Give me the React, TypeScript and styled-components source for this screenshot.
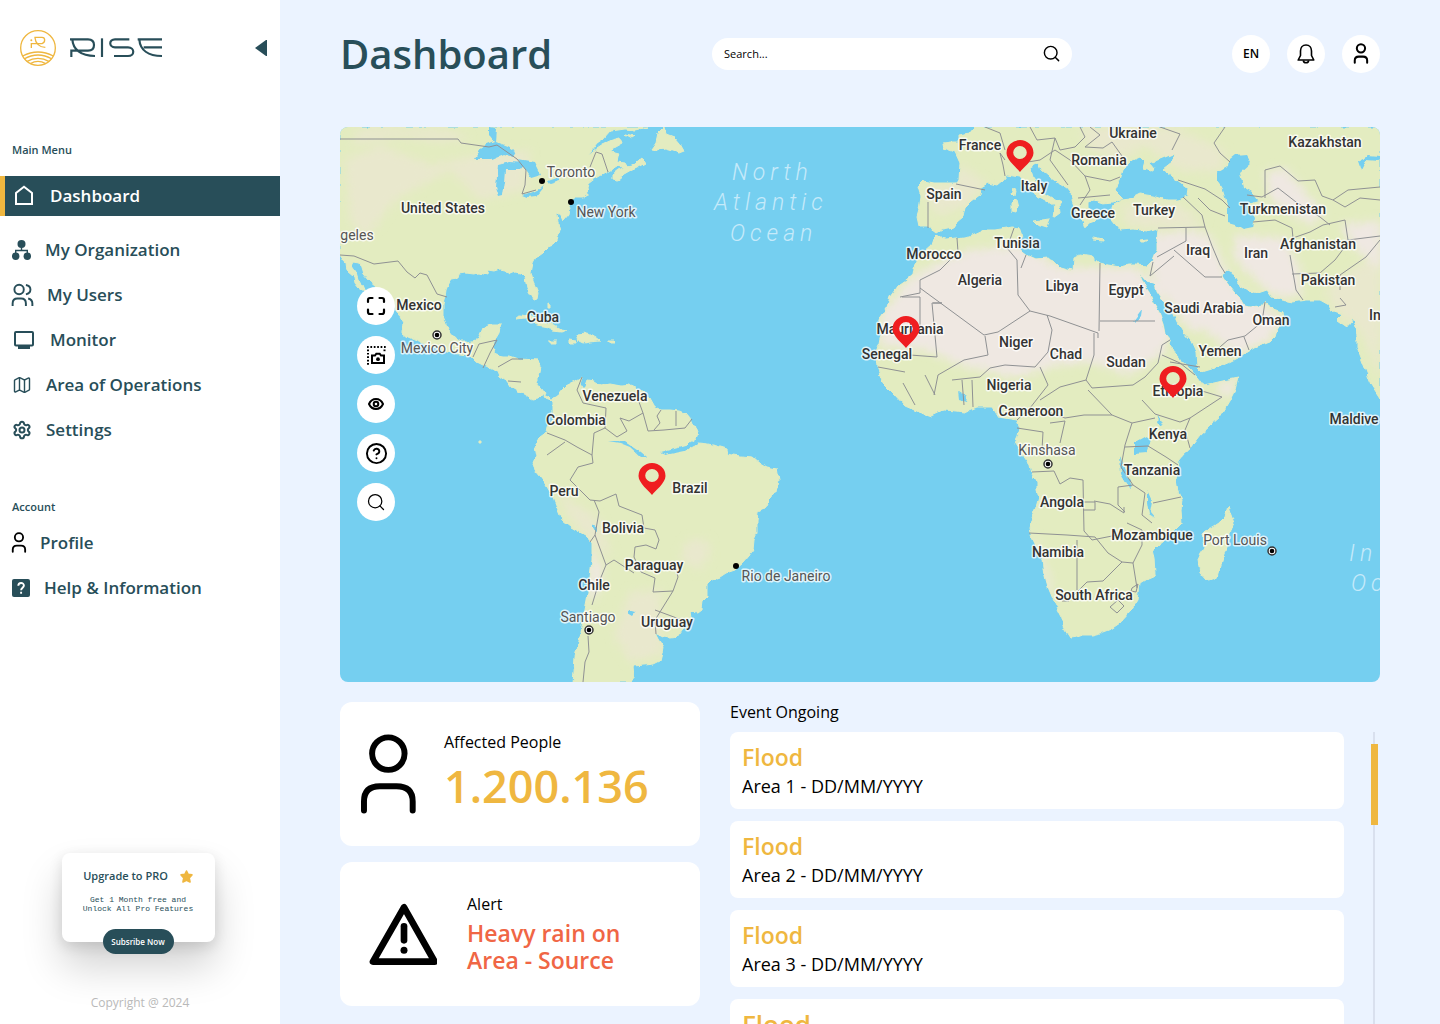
import React from "react";
import styled, { createGlobalStyle, css } from "styled-components";
import { CircleHelp, Map as MapIcon, Search, Settings } from "lucide-react";

const color = {
  teal: "#284e59",
  amber: "#efb740",
  coral: "#f06645",
  page: "#ebf3ff",
  water: "#75cff0",
  land: "#e3ecc0",
  sand: "#efe8e2",
  border: "#8f9193",
};

const GlobalStyle = createGlobalStyle`
  *, *::before, *::after { box-sizing: border-box; }
  body { margin: 0; background: ${color.page}; font-family: "Open Sans", "Noto Sans", sans-serif; color: #000; }
  button, input { font: inherit; color: inherit; }
  h1, h2, h3, p, ul { margin: 0; padding: 0; }
`;

const Shell = styled.div`
  display: grid;
  grid-template-columns: 280px minmax(0, 1fr);
  height: 100vh;
  overflow: hidden;
`;

const Sidebar = styled.aside`
  display: flex;
  flex-direction: column;
  background: #fff;
  color: ${color.teal};
  min-height: 0;
`;

const Brand = styled.div`
  display: flex;
  align-items: center;
  justify-content: space-between;
  height: 96px;
  padding: 0 12px 0 19px;
  margin-bottom: 44px;
`;

const CollapseButton = styled.button`
  display: flex;
  padding: 0;
  border: 0;
  background: none;
  cursor: pointer;
`;

const NavTitle = styled.h2`
  padding-left: 12px;
  font-size: 11px;
  line-height: 20px;
  font-weight: 600;
`;

const NavGroup = styled.ul<{ $top: number; $bottom: number }>`
  list-style: none;
  && { margin: ${(p) => p.$top}px 0 ${(p) => p.$bottom}px; }
`;

const NavLink = styled.a<{ $active?: boolean }>`
  display: flex;
  align-items: center;
  gap: 14px;
  height: 45px;
  padding-left: 12px;
  color: ${color.teal};
  font-size: 17px;
  line-height: 22px;
  font-weight: 600;
  text-decoration: none;
  svg { flex: none; }
  ${(p) =>
    p.$active &&
    css`
      height: 40px;
      margin-bottom: 11px;
      padding-left: 7px;
      border-left: 5px solid ${color.amber};
      background: ${color.teal};
      color: #fff;
    `}
`;

const SidebarFooter = styled.footer`
  display: flex;
  flex-direction: column;
  align-items: center;
  margin-top: auto;
  padding-bottom: 11px;
`;

const UpgradeCard = styled.section`
  display: flex;
  flex-direction: column;
  align-items: center;
  width: 153px;
  height: 89px;
  margin: 0 4px 51px 0;
  padding-top: 13px;
  border-radius: 8px;
  background: #fff;
  box-shadow: 0 24px 40px rgba(0, 0, 0, 0.18), 0 4px 14px rgba(0, 0, 0, 0.12);
`;

const UpgradeTitle = styled.h3`
  display: flex;
  align-items: center;
  gap: 12px;
  font-size: 11px;
  line-height: 20px;
  font-weight: 600;
`;

const UpgradeText = styled.p`
  && { margin: 9px 0 16px; }
  font-family: "Liberation Mono", monospace;
  font-size: 8px;
  line-height: 9px;
  text-align: center;
`;

const SubscribeButton = styled.button`
  flex: none;
  width: 71px;
  height: 25px;
  padding: 0;
  border: 0;
  border-radius: 13px;
  background: ${color.teal};
  color: #fff;
  font-size: 8px;
  font-weight: 600;
  cursor: pointer;
`;

const Copyright = styled.p`
  font-size: 12px;
  line-height: 20px;
  color: #b9b9b9;
`;

const Main = styled.main`
  display: flex;
  flex-direction: column;
  min-width: 0;
  min-height: 0;
  padding: 0 60px;
`;

const Header = styled.header`
  display: flex;
  flex: none;
  align-items: center;
  justify-content: space-between;
  height: 107px;
  margin-bottom: 20px;
`;

const PageTitle = styled.h1`
  color: ${color.teal};
  font-size: 40px;
  line-height: 48px;
  font-weight: 600;
`;

const SearchBox = styled.label`
  display: flex;
  align-items: center;
  width: 360px;
  height: 32px;
  padding: 0 11px 0 12px;
  border-radius: 16px;
  background: #fff;
`;

const SearchInput = styled.input`
  flex: 1;
  min-width: 0;
  padding: 0;
  border: 0;
  outline: 0;
  background: none;
  font-size: 11px;
  &::placeholder { color: #000; opacity: 1; }
`;

const HeaderActions = styled.div`
  display: flex;
  gap: 17px;
`;

const RoundButton = styled.button`
  display: flex;
  align-items: center;
  justify-content: center;
  width: 38px;
  height: 38px;
  padding: 0;
  border: 0;
  border-radius: 50%;
  background: #fff;
  color: #000;
  font-size: 12px;
  font-weight: 600;
  cursor: pointer;
`;

const MapPanel = styled.section`
  position: relative;
  flex: none;
  overflow: hidden;
  border-radius: 8px;
  background: ${color.water};
`;

const MapDrawing = styled.svg`
  display: block;
  width: 100%;
  height: auto;
`;

const MapTools = styled.div`
  position: absolute;
  left: 17px;
  top: 160px;
  display: flex;
  flex-direction: column;
  gap: 11px;
`;

const Country = styled.text<{ $city?: boolean }>`
  font-family: Roboto, sans-serif;
  font-size: 14px;
  font-weight: ${(p) => (p.$city ? 400 : 500)};
  fill: ${(p) => (p.$city ? "#555" : "#333")};
  stroke: rgba(255, 255, 255, 0.75);
  stroke-width: 3px;
  stroke-linejoin: round;
  paint-order: stroke;
  text-anchor: middle;
`;

const Ocean = styled.text`
  font-family: Roboto, sans-serif;
  font-size: 23px;
  font-style: italic;
  font-weight: 300;
  letter-spacing: 5px;
  fill: #c5eafa;
`;

const Lower = styled.div`
  display: grid;
  grid-template-columns: 360px minmax(0, 1fr);
  flex: 1;
  gap: 30px;
  min-height: 0;
  padding-top: 20px;
`;

const Stats = styled.div`
  display: flex;
  flex-direction: column;
  gap: 16px;
`;

const StatCard = styled.section<{ $inset: number; $gap: number }>`
  display: flex;
  flex: none;
  align-items: center;
  gap: ${(p) => p.$gap}px;
  height: 144px;
  padding-left: ${(p) => p.$inset}px;
  border-radius: 12px;
  background: #fff;
`;

const StatLabel = styled.h2`
  font-size: 16px;
  line-height: 24px;
  font-weight: 400;
`;

const StatNumber = styled.p`
  color: ${color.amber};
  font-size: 45px;
  line-height: 64px;
  font-weight: 600;
`;

const AlertText = styled.p`
  && { margin: 4px 0 3px; }
  color: ${color.coral};
  font-size: 23px;
  line-height: 27px;
  font-weight: 600;
`;

const Events = styled.section`
  display: flex;
  flex-direction: column;
  min-height: 0;
`;

const EventsTitle = styled.h2`
  flex: none;
  font-size: 16px;
  line-height: 20px;
  font-weight: 400;
  padding-bottom: 10px;
`;

const EventsBody = styled.div`
  display: flex;
  flex: 1;
  gap: 27px;
  min-height: 0;
  overflow: hidden;
`;

const EventList = styled.ul`
  display: flex;
  flex: 1;
  flex-direction: column;
  gap: 12px;
  list-style: none;
`;

const EventCard = styled.li`
  flex: none;
  height: 77px;
  padding: 11px 12px;
  border-radius: 8px;
  background: #fff;
`;

const EventName = styled.h3<{ $large?: boolean }>`
  color: ${color.amber};
  font-size: ${(p) => (p.$large ? 26 : 23)}px;
  line-height: 28px;
  font-weight: 600;
`;

const EventMeta = styled.p`
  padding-top: 1px;
  font-size: 18px;
  line-height: 28px;
`;

const ScrollTrack = styled.div`
  width: 7px;
  margin-right: 2px;
  padding-top: 12px;
  background: linear-gradient(#d9e0ee, #d9e0ee) 2px 0 / 2px 100% no-repeat;
`;

const ScrollThumb = styled.div`
  width: 7px;
  height: 81px;
  background: ${color.amber};
`;

function Logo() {
  return (
    <svg width="146" height="38" viewBox="57 87 438 114" fill="none" role="img" aria-label="RISE">
      <g stroke={color.amber} strokeWidth="4">
        <circle cx="114" cy="144" r="52" />
        <path d="M103 112H126Q134 112 134 120T126 131H94V144M105 113C106 130 118 142 136 142" />
        <path d="M68 168Q114 144 160 168M72 177Q114 153 156 177M80 185Q114 165 148 185M91 191Q114 177 137 191" />
      </g>
      <circle cx="94" cy="121" r="3" fill={color.amber} />
      <g stroke={color.teal} strokeWidth="6.5">
        <path d="M210 118H264Q282 118 282 135T264 152H214V171M217 118C219 148 242 168 285 168" />
        <path d="M306 115V171" />
        <path d="M388 118H345C326 118 326 142 345 142H384C405 142 405 168 384 168H342" />
        <path d="M413 118H486M418 118C420 150 445 168 486 168M431 142H486" />
      </g>
    </svg>
  );
}

const HomeIcon = () => (
  <svg width="24" height="24" viewBox="0 0 24 24" fill="none" stroke="currentColor" strokeWidth="2">
    <path d="M4 20V9L12 2.700L20 9V20Z" />
  </svg>
);

const OrgIcon = () => (
  <svg width="19" height="20" viewBox="0 0 19 20" fill="currentColor">
    <circle cx="9.500" cy="4" r="4" />
    <circle cx="3.700" cy="16.300" r="3.700" />
    <circle cx="15.300" cy="16.300" r="3.700" />
    <path d="M9.500 6V10.500M3.700 14V10.500H15.300V14" fill="none" stroke="currentColor" strokeWidth="1.400" />
  </svg>
);

const UsersIcon = () => (
  <svg width="21" height="22" viewBox="35 158 63 68" fill="none" stroke="currentColor" strokeWidth="6" overflow="visible">
    <circle cx="56" cy="175" r="14.500" />
    <path d="M36 226V218Q36 203 51 203H62Q77 203 77 218V226M77 161Q91 163 91 175T77 190M84 203Q97 206 97 218V226" />
  </svg>
);

const MonitorIcon = () => (
  <svg width="24" height="20" viewBox="0 0 24 20" fill="none" stroke="currentColor" strokeWidth="2">
    <rect x="3" y="2" width="18" height="13.500" rx="1" />
    <path d="M6 17.500H18" strokeWidth="3" />
  </svg>
);

function PersonIcon({ width, height, stroke = 18 }: { width: number; height: number; stroke?: number }) {
  return (
    <svg width={width} height={height} viewBox="63 132 166 240" fill="none" stroke="#000" strokeWidth={stroke} strokeLinecap="round" overflow="visible">
      <circle cx="145.500" cy="190.500" r="49" />
      <path d="M72 362V335Q72 289 120 289H170Q219 289 219 335V362" />
    </svg>
  );
}

const HelpSquareIcon = () => (
  <svg width="18" height="18" viewBox="0 0 18 18" fill="none">
    <rect width="18" height="18" rx="2" fill="currentColor" />
    <path d="M6.300 6.800C6.300 3 11.900 3.100 11.900 6.600C11.900 8.600 9.100 8.800 9.100 11.200M9.100 12.800V14.800" stroke="#fff" strokeWidth="1.900" />
  </svg>
);

const BellIcon = () => (
  <svg width="20" height="22" viewBox="0 0 20 22" fill="none" stroke="#000" strokeWidth="1.600" strokeLinejoin="round">
    <path d="M10 2C6.500 2 4.500 4.700 4.500 8V12.500L2.200 17H17.800L15.500 12.500V8C15.500 4.700 13.500 2 10 2Z" />
    <path d="M7.300 17.500C7.800 20.500 12.200 20.500 12.700 17.500" />
  </svg>
);

const ExpandIcon = () => (
  <svg width="20" height="20" viewBox="0 0 20 20" fill="none" stroke="#000" strokeWidth="2.200" strokeLinecap="round">
    <path d="M2 6V4Q2 2 4 2H6.500M13.500 2H16Q18 2 18 4V6M18 13.500V16Q18 18 16 18H13.500M6.500 18H4Q2 18 2 16V13.500" />
  </svg>
);

const SnapshotIcon = () => (
  <svg width="20" height="20" viewBox="0 0 20 20" fill="none" stroke="#000" strokeWidth="2">
    <path d="M1 2H20" strokeDasharray="1.700 1.700" />
    <path d="M2 4.500V20" strokeDasharray="1.700 1.700" />
    <path d="M18.500 4.500V7" strokeDasharray="1.700 1.700" />
    <path d="M6 10.500H9L10.300 8.700H13.700L15 10.500H18V18H6Z" />
    <circle cx="12" cy="14.200" r="1.900" fill="#000" stroke="none" />
  </svg>
);

const EyeIcon = () => (
  <svg width="16" height="12" viewBox="0 0 16 12" fill="none" stroke="#000" strokeWidth="2">
    <path d="M1 6C4 -.6 12 -.6 15 6C12 12.600 4 12.600 1 6Z" />
    <circle cx="8" cy="6" r="2.300" />
  </svg>
);

const AlertIcon = () => (
  <svg width="68" height="63" viewBox="88 642 204 187" fill="none" stroke="#000" strokeWidth="20" strokeLinecap="round" strokeLinejoin="round">
    <path d="M193 654L100 817H285Z" />
    <path d="M193 711V753" />
    <circle cx="193" cy="783" r="10.500" fill="#000" stroke="none" />
  </svg>
);

const americas = [
  "M340 127H648L636 130L624 129L610 131L603 139L597 143L588 155L597 148L603 144L612 140L620 138L622 143L613 148L612 151L620 153L618 162L625 163L628 168L617 166L607 172L600 176L593 180L588 184L587 188L588 195L583 198L573 198L567 203L570 208L569 214L563 221L560 214L557 213L558 223L560 230L558 237L557 241L553 245L548 247L543 252L536 257L533 263L531 273L533 281L536 288L538 293L537 299L534 300L530 293L527 288L525 278L520 273L515 272L510 274L505 270L500 269L494 271L488 270L487 275L480 273L473 274L465 273L459 274L458 278L452 279L448 285L446 290L445 297L443 304L443 317L448 330L455 338L461 342L467 342L477 340L480 335L483 328L487 326L492 324L501 324L499 333L496 338L495 343L493 353L498 355L503 356L510 356L519 359L538 360L540 366L538 377L536 382L541 388L545 393L543 397L551 400L560 393L566 386L574 382L575 386L565 395L558 402L552 402L547 397L542 395L538 399L533 400L526 396L520 392L510 386L507 381L500 376L498 371L487 367L475 361L467 355L460 354L450 353L436 348L420 342L408 337L403 333L404 323L400 316L392 305L386 296L377 287L370 281L363 273L360 263L354 262L352 266L356 272L358 279L363 285L366 292L359 288L355 283L354 277L347 271L346 264L340 255Z",
  "M613 174L618 170L623 168L631 166L637 162L642 158L645 163L638 167L631 170L624 174L617 180L613 179Z",
  "M651 149L656 142L658 133L664 127L666 134L674 137L680 144L684 151L679 153L673 151L666 149L656 150Z",
  "M625 134L635 136L632 138Z",
  "M553 403L560 393L566 386L574 382L582 377L580 383L584 389L587 381L594 382L600 386L610 384L621 386L630 385L636 390L643 391L650 398L655 407L661 410L670 410L679 411L686 413L691 419L693 424L698 432L696 438L690 442L685 447L679 450L687 449L695 445L698 443L708 444L717 446L727 449L728 454L740 456L753 457L760 463L767 467L777 469L779 480L777 491L771 499L767 503L764 509L758 512L757 522L757 533L754 540L753 550L749 556L743 563L735 570L726 573L720 577L712 580L707 585L707 597L702 602L701 609L697 612L690 611L691 618L685 622L682 630L677 637L670 638L663 637L655 633L658 639L663 647L662 653L660 661L654 664L645 665L633 666L634 677L631 682H573L574 672L575 657L580 637L584 615L587 600L590 577L592 560L592 543L585 535L571 527L562 520L558 510L553 497L546 485L540 477L535 471L533 463L537 458L535 448L537 441L540 437L547 432L548 427L553 417Z",
  "M515 319L520 315L532 316L542 322L555 325L561 329L568 330L561 332L552 331L549 327L538 325L525 318Z",
  "M577 334L587 333L596 338L600 341L589 342L583 343L579 341Z",
  "M549 341H556V343H549ZM608 341H614V343H608ZM569 340L576 341V343H569ZM548 304L550 305V308H548ZM478 441H480V443H478Z",
];

const afroEurasia = [
  "M975 127L970 133L958 135L958 142L951 142L943 143L944 148L955 152L960 163L959 180L957 183L946 183L934 183L924 181L918 187L921 197L919 210L917 217L919 226L928 226L937 233L942 230L953 228L957 222L963 217L965 208L972 201L980 195L981 187L988 183L997 185L1003 180L1007 175L1020 177L1024 183L1027 187L1036 195L1045 200L1053 205L1054 211L1053 218L1060 213L1059 205L1063 203L1052 198L1045 194L1041 188L1033 177L1030 167L1038 163L1041 170L1048 176L1057 182L1067 188L1071 193L1072 200L1076 212L1082 219L1085 228L1089 223L1095 221L1100 217L1094 212L1087 208L1087 202L1094 200L1103 203L1112 202L1120 200L1123 198L1115 190L1120 180L1123 170L1133 160L1140 157L1145 162L1143 169L1150 171L1154 168L1150 163L1175 153L1172 162L1163 169L1177 180L1188 188L1187 197L1178 200L1167 200L1153 196L1140 194L1130 199L1122 200L1113 205L1110 213L1112 220L1120 230L1133 229L1147 231L1158 228L1157 240L1157 250L1153 260L1147 266L1137 265L1128 265L1120 267L1108 265L1100 263L1093 257L1080 255L1074 258L1073 270L1067 269L1060 267L1054 261L1047 258L1036 259L1027 255L1018 248L1020 241L1023 237L1020 228L1012 227L1007 228L995 230L983 230L970 236L957 238L945 239L938 235L934 239L932 245L923 253L915 263L913 275L906 281L897 287L890 297L887 307L880 317L878 323L882 333L880 343L876 351L877 367L883 383L893 393L905 406L919 412L931 416L944 410L957 411L965 412L977 407L992 407L998 417L1017 420L1020 428L1018 437L1015 443L1022 454L1030 465L1032 474L1037 483L1037 490L1039 497L1036 507L1032 517L1029 528L1030 533L1036 546L1043 560L1045 576L1048 587L1053 599L1057 607L1063 619L1063 627L1070 638L1077 637L1083 635L1092 635L1100 633L1111 629L1120 623L1131 611L1138 600L1140 583L1148 578L1155 575L1154 558L1152 550L1158 544L1167 537L1176 529L1182 523L1181 510L1182 500L1178 491L1176 480L1178 460L1183 454L1190 448L1200 435L1211 425L1220 417L1229 402L1235 390L1238 378L1227 380L1214 383L1203 385L1197 377L1189 368L1177 357L1173 349L1170 340L1165 334L1163 323L1159 312L1153 302L1149 292L1144 285L1139 273L1146 281L1155 283L1157 292L1164 302L1173 312L1178 323L1184 333L1191 341L1196 352L1197 367L1202 372L1215 368L1229 362L1243 355L1254 348L1270 342L1275 337L1277 330L1283 320L1282 312L1273 309L1267 305L1265 300L1260 306L1250 307L1243 305L1239 297L1234 292L1227 283L1222 275L1227 271L1235 275L1238 284L1248 291L1258 293L1267 290L1272 297L1282 300L1293 302L1306 300L1320 300L1329 305L1333 312L1342 315L1337 320L1347 327L1353 319L1357 335L1357 347L1362 360L1367 373L1371 384L1380 398V127Z",
  "M1228 506L1231 515L1234 523L1231 529L1227 547L1222 562L1218 577L1213 580L1207 581L1200 573L1198 560L1201 553L1205 547L1202 533L1205 530L1213 527L1219 523L1225 517Z",
  "M1014 188L1016 191L1015 196L1012 193ZM1012 203L1016 199L1018 207L1016 213L1012 212ZM1034 221L1050 219L1047 227L1037 224ZM1093 238L1103 240V241L1093 240ZM1140 240L1147 239L1145 242L1141 242Z",
];

const sands = [
  "M938 262L970 250L1020 245L1060 267H1137L1160 290L1172 330L1164 352L1130 375L1090 362L1055 366L1015 378L960 365L925 350L880 346L882 312L912 277Z",
  "M1150 235L1190 230L1210 235L1233 285L1262 304L1283 318L1268 342L1235 355L1205 330L1190 330L1155 284L1149 262Z",
  "M1235 235L1285 238L1300 270L1300 298L1272 295L1235 260Z",
  "M1265 172L1285 168L1325 215L1310 225L1270 200Z",
  "M1340 225L1380 220V270L1352 245Z",
  "M592 540L597 558L603 570L597 595L587 600L590 570Z",
  "M1030 530L1043 555L1052 595L1045 590L1040 560Z",
  "M1222 382L1238 378L1230 396L1217 393Z",
];

const lightSands = [
  "M345 160L380 145L430 165L480 155L530 150L525 190L480 200L450 170L395 200L365 240L350 220Z",
  "M360 128L450 130L470 140L440 142L400 137L350 145Z",
  "M630 592L660 590L662 655L630 662L614 635Z",
  "M688 540L708 540L710 557L697 570L680 558Z",
  "M555 490L600 520L612 560L600 550L575 525Z",
  "M960 165L985 182L970 205L935 215L925 190L955 183Z",
  "M1080 127H1170L1225 150L1220 172L1180 170L1145 145L1120 158L1090 150Z",
  "M1120 205L1180 205L1205 225L1170 228L1130 227Z",
  "M1325 290L1380 250V380L1360 330L1335 310Z",
];

const lakes = [
  "M474 159L484 145L494 141L490 136L490 127L496 128L495 142L508 147L516 152L513 157L503 154L491 159Z",
  "M498 165L510 162L525 163L520 169L506 169L505 182L503 195L499 196L496 187Z",
  "M518 160L535 163L541 175L531 178L525 169Z",
  "M522 196L533 192L545 186L536 197L527 198Z",
  "M548 181L560 177V181L550 184Z",
  "M1235 155L1246 154L1251 163L1240 173L1243 187L1252 192L1258 200L1247 203L1255 217L1253 228L1243 230L1235 225L1228 223L1228 207L1222 187L1217 180L1217 173L1229 166L1230 159Z",
  "M1358 161L1368 156L1380 157V161L1366 160L1361 170Z",
  "M1134 443L1145 437L1151 440L1146 453L1134 454Z",
  "M1120 455L1124 468L1132 485L1129 488L1121 474ZM1147 490L1152 501L1150 512L1155 518L1149 514L1147 502Z",
  "M1133 321L1142 309L1141 316L1135 323ZM1158 415L1163 426L1157 423Z",
  "M608 441L625 441L640 451L647 457L641 457L630 447L620 443ZM660 453L685 446L695 443L685 451L665 455Z",
  "M592 524L598 527L597 531L592 528ZM628 610L635 612L632 616L627 613Z",
  "M958 391L967 397L966 402L959 400Z",
];

const borders =
  "M340 139H458L461 143L489 147L497 145L517 159L526 170L525 185L522 194L536 190M590 167L596 152L602 154L608 172" +
  "M340 255L354 256L374 264L398 261L407 272L415 278L420 273L427 275L437 294L447 297" +
  "M473 357L479 344L497 340L490 353L483 368M498 367L512 359L523 359M508 381L521 382" +
  "M582 377L577 390L583 403L606 408L605 428L617 437L627 431L620 418L629 421L643 413L648 431L664 430L685 428L692 419M654 430L660 423L657 416L661 410M676 411V426M643 413L639 402" +
  "M547 433L565 440L577 447L592 455L593 463L578 467L570 480L583 493L590 500L600 501L616 494L619 506L642 515L644 528L655 530L659 540L656 549L646 545L635 547L634 557L641 572L655 578L653 592L673 591L678 577L675 565M605 428L594 433L592 455M547 455L565 442M594 500L599 512L595 535L606 565L599 582L592 605M595 535L590 542M606 565L614 560L634 573M673 591L655 620L656 634M655 610L682 620M588 636L589 652L585 662L583 682" +
  "M956 184L985 190M928 228V202M1005 160L1000 153L1003 165L1005 176M985 127L1000 133L1005 150M1030 127L1037 140L1055 138L1060 150L1075 147L1085 137L1080 127M1022 163L1040 160L1055 150L1070 160L1085 176L1090 190L1080 205M1055 138L1050 160L1068 185M1085 176L1110 181L1120 177M1078 198L1110 195M1090 127L1100 135L1085 147L1103 148L1112 142L1122 156M1160 127L1180 134L1172 150M1225 127L1214 143L1220 153L1230 162" +
  "M957 238L958 252L940 270L920 280L920 293L900 297M920 288L984 335L998 332L1030 311L1050 316L1098 333V338M1014 228L1007 248L1017 260L1018 295L1030 311M1026 255L1021 268M1100 263L1099 331M1100 321H1155M902 297H920V327H897M933 303H942L932 303L937 357L910 355M985 336L988 355L964 360L938 375L934 395M1047 315L1052 330L1048 352L1035 367L1005 365L990 368L980 377L952 380M1094 333V355L1086 380L1060 387L1040 400M1040 367L1048 385L1030 408L1017 420M1086 380L1092 388L1133 385L1145 377L1158 363L1162 345L1170 340M1142 400L1155 414L1180 422L1190 418L1222 397L1192 388M1162 355L1180 363L1195 375M1088 390L1112 415L1084 415L1065 418L1046 411M1112 415L1132 423L1155 418M1132 423L1125 445L1121 467L1133 485L1118 487V505L1125 512M1050 423L1065 421L1060 443M1017 428L1043 432L1042 450M1032 472L1054 471L1060 484L1070 478L1083 480L1084 531L1092 540L1117 535M1029 533L1067 535L1095 537M1077 540V590M1095 537L1108 553L1122 562L1133 563L1142 545V530L1127 523M1122 562L1103 581L1087 582L1072 597M1133 563L1137 588M1083 502H1095V510H1083M1094 501L1110 504L1124 513V507M1133 485L1145 493L1142 515L1152 523M1153 503L1181 497M1125 447L1148 446L1166 457L1178 465M1190 448L1185 430L1190 418M1110 607L1118 600L1124 606L1117 613ZM1062 601H1069M962 380L964 405M972 380L973 407M925 375L935 395M878 367L905 372M903 383L915 405M1132 588L1138 584L1136 592L1131 591Z" +
  "M1158 228L1205 227L1212 246L1220 265L1225 273M1186 228V241L1157 257M1174 250L1205 277L1222 277M1174 256L1150 276L1153 262M1178 180L1205 189L1222 200L1230 208M1198 198L1210 210L1225 216M1183 197L1202 215L1205 227M1265 198V170L1280 166L1298 181L1315 180L1322 196L1333 200L1348 190L1380 187M1247 195L1262 197L1278 188L1296 202L1320 217L1330 225M1253 222L1275 220L1292 228L1293 238L1310 232L1323 225L1345 220L1348 240L1380 236M1290 255L1296 290L1303 300M1292 274L1320 273L1335 260L1350 240M1340 298L1346 305L1335 307M1340 290L1340 275L1366 257L1380 240M1265 302L1262 322L1245 336L1228 340L1213 353M1244 337L1249 350M1170 362L1200 367M1333 200L1345 207L1360 198L1380 200";

const labels: [string, number, number, boolean?][] = [
  ["United States", 443, 213], ["Toronto", 571, 177, true], ["New York", 606, 217, true], ["geles", 357, 240, true],
  ["Mexico", 419, 310], ["Mexico City", 437, 353, true], ["Cuba", 543, 322], ["Venezuela", 615, 401], ["Colombia", 576, 425],
  ["Peru", 564, 496], ["Brazil", 690, 493], ["Bolivia", 623, 533], ["Paraguay", 654, 570], ["Chile", 594, 590],
  ["Rio de Janeiro", 786, 581, true], ["Santiago", 588, 622, true], ["Uruguay", 667, 627],
  ["France", 980, 150], ["Spain", 944, 199], ["Italy", 1034, 191], ["Ukraine", 1133, 138], ["Romania", 1099, 165],
  ["Greece", 1093, 218], ["Turkey", 1154, 215], ["Kazakhstan", 1325, 147], ["Turkmenistan", 1283, 214], ["Iraq", 1198, 255],
  ["Iran", 1256, 258], ["Afghanistan", 1318, 249], ["Pakistan", 1328, 285], ["Tunisia", 1017, 248], ["Morocco", 934, 259],
  ["Algeria", 980, 285], ["Libya", 1062, 291], ["Egypt", 1126, 295], ["Saudi Arabia", 1204, 313], ["Oman", 1271, 325],
  ["Mauritania", 910, 334], ["Senegal", 887, 359], ["Niger", 1016, 347], ["Chad", 1066, 359], ["Sudan", 1126, 367],
  ["Yemen", 1220, 356], ["Ethiopia", 1178, 396], ["Nigeria", 1009, 390], ["Cameroon", 1031, 416], ["Kenya", 1168, 439],
  ["Kinshasa", 1047, 455, true], ["Tanzania", 1152, 475], ["Angola", 1062, 507], ["Mozambique", 1152, 540],
  ["Port Louis", 1235, 545, true], ["Namibia", 1058, 557], ["South Africa", 1094, 600],
];

const cityDots = [[542, 181], [571, 202], [736, 566]];
const capitals = [[437, 335], [589, 630], [1048, 464], [1272, 551]];
const pins = [[1020, 172], [906, 348], [1173, 398], [652, 495]];

function WorldMap() {
  const land = [...americas, ...afroEurasia];
  return (
    <MapDrawing viewBox="340 127 1040 555" role="img" aria-label="World map with ongoing events">
      <defs>
        <filter id="soften"><feGaussianBlur stdDeviation="5" /></filter>
        <filter id="coastline" filterUnits="userSpaceOnUse" x="330" y="117" width="1060" height="575">
          <feTurbulence type="fractalNoise" baseFrequency="0.12" numOctaves="2" seed="4" />
          <feDisplacementMap in="SourceGraphic" scale="5" xChannelSelector="R" yChannelSelector="G" />
        </filter>
        <clipPath id="coast">
          {land.map((d) => <path key={d} d={d} />)}
        </clipPath>
      </defs>
      <g filter="url(#coastline)">
        {land.map((d) => <path key={d} d={d} fill={color.land} stroke={color.land} />)}
        <g clipPath="url(#coast)">
          <path d={lightSands.join("")} fill="#e9e8cd" filter="url(#soften)" />
          <path d={sands.join("")} fill={color.sand} filter="url(#soften)" />
        </g>
        <path d={lakes.join("")} fill={color.water} />
      </g>
      <path d={borders} fill="none" stroke={color.border} strokeWidth="1" strokeLinejoin="round" />
      <Ocean x="732" y="180">North</Ocean>
      <Ocean x="714" y="210">Atlantic</Ocean>
      <Ocean x="730" y="241">Ocean</Ocean>
      <Ocean x="1349" y="561">In</Ocean>
      <Ocean x="1351" y="591">Oc</Ocean>
      {cityDots.map(([x, y]) => <circle key={x} cx={x} cy={y} r="3" />)}
      {capitals.map(([x, y]) => (
        <g key={x}>
          <circle cx={x} cy={y} r="4" fill="#fff" stroke="#333" strokeWidth="1.500" />
          <circle cx={x} cy={y} r="2.300" />
        </g>
      ))}
      {labels.map(([name, x, y, city]) => <Country key={name} x={x} y={y} $city={city}>{name}</Country>)}
      <Country x={1354} y={424}>Maldive</Country>
      <Country x={1375} y={320}>In</Country>
      {pins.map(([x, y]) => (
        <path key={x} fill="#ef1d20" fillRule="evenodd" transform={`translate(${x} ${y})`}
          d="M0 0C-3 -4 -13.500 -12 -13.500 -19A13.500 13 0 0 1 13.500 -19C13.500 -12 3 -4 0 0ZM0 -26A6.800 6.500 0 0 0 0 -13A6.800 6.500 0 0 0 0 -26Z" />
      ))}
    </MapDrawing>
  );
}

const mainMenu = [
  { label: "Dashboard", icon: <HomeIcon />, active: true },
  { label: "My Organization", icon: <OrgIcon /> },
  { label: "My Users", icon: <UsersIcon /> },
  { label: "Monitor", icon: <MonitorIcon /> },
  { label: "Area of Operations", icon: <MapIcon size={20} strokeWidth={1.7} /> },
  { label: "Settings", icon: <Settings size={20} strokeWidth={2.4} /> },
];

const accountMenu = [
  { label: "Profile", icon: <PersonIcon width={14} height={21} stroke={22} /> },
  { label: "Help & Information", icon: <HelpSquareIcon /> },
];

const tools = [
  { label: "Full screen", icon: <ExpandIcon /> },
  { label: "Take snapshot", icon: <SnapshotIcon /> },
  { label: "Toggle visibility", icon: <EyeIcon /> },
  { label: "Map help", icon: <CircleHelp size={23} strokeWidth={2} /> },
  { label: "Search map", icon: <Search size={20} strokeWidth={1.5} /> },
];

export default function App() {
  return (
    <>
      <GlobalStyle />
      <Shell>
        <Sidebar>
          <Brand>
            <Logo />
            <CollapseButton aria-label="Collapse menu">
              <svg width="13" height="16" viewBox="0 0 13 16"><path d="M0 8L11 0H12V16H11Z" fill={color.teal} /></svg>
            </CollapseButton>
          </Brand>
          <nav>
            <NavTitle>Main Menu</NavTitle>
            <NavGroup $top={16} $bottom={45}>
              {mainMenu.map((item) => (
                <li key={item.label}>
                  <NavLink href="#" $active={item.active}>{item.icon}{item.label}</NavLink>
                </li>
              ))}
            </NavGroup>
            <NavTitle>Account</NavTitle>
            <NavGroup $top={3} $bottom={0}>
              {accountMenu.map((item) => (
                <li key={item.label}>
                  <NavLink href="#">{item.icon}{item.label}</NavLink>
                </li>
              ))}
            </NavGroup>
          </nav>
          <SidebarFooter>
            <UpgradeCard>
              <UpgradeTitle>
                Upgrade to PRO
                <svg width="13" height="13" viewBox="0 0 24 24" fill={color.amber} stroke={color.amber} strokeWidth="3" strokeLinejoin="round">
                  <path d="M12 2L15 8L22 9L17 14.500L18.500 22L12 19L5.500 22L7 14.500L2 9L9 8Z" />
                </svg>
              </UpgradeTitle>
              <UpgradeText>Get 1 Month free and<br />Unlock All Pro Features</UpgradeText>
              <SubscribeButton>Subsribe Now</SubscribeButton>
            </UpgradeCard>
            <Copyright>Copyright @ 2024</Copyright>
          </SidebarFooter>
        </Sidebar>
        <Main>
          <Header>
            <PageTitle>Dashboard</PageTitle>
            <SearchBox>
              <SearchInput type="text" placeholder="Search..." aria-label="Search" />
              <Search size={19} strokeWidth={1.8} />
            </SearchBox>
            <HeaderActions>
              <RoundButton>EN</RoundButton>
              <RoundButton aria-label="Notifications"><BellIcon /></RoundButton>
              <RoundButton aria-label="Profile"><PersonIcon width={14} height={21} stroke={24} /></RoundButton>
            </HeaderActions>
          </Header>
          <MapPanel>
            <WorldMap />
            <MapTools>
              {tools.map((tool) => (
                <RoundButton key={tool.label} aria-label={tool.label}>{tool.icon}</RoundButton>
              ))}
            </MapTools>
          </MapPanel>
          <Lower>
            <Stats>
              <StatCard $inset={21} $gap={28}>
                <PersonIcon width={55} height={80} />
                <div>
                  <StatLabel>Affected People</StatLabel>
                  <StatNumber>1.200.136</StatNumber>
                </div>
              </StatCard>
              <StatCard $inset={29} $gap={30}>
                <AlertIcon />
                <div>
                  <StatLabel>Alert</StatLabel>
                  <AlertText>Heavy rain on<br />Area - Source</AlertText>
                </div>
              </StatCard>
            </Stats>
            <Events>
              <EventsTitle>Event Ongoing</EventsTitle>
              <EventsBody>
                <EventList>
                  {[1, 2, 3, 4].map((area) => (
                    <EventCard key={area}>
                      <EventName $large={area === 4}>Flood</EventName>
                      <EventMeta>Area {area} - DD/MM/YYYY</EventMeta>
                    </EventCard>
                  ))}
                </EventList>
                <ScrollTrack><ScrollThumb /></ScrollTrack>
              </EventsBody>
            </Events>
          </Lower>
        </Main>
      </Shell>
    </>
  );
}
